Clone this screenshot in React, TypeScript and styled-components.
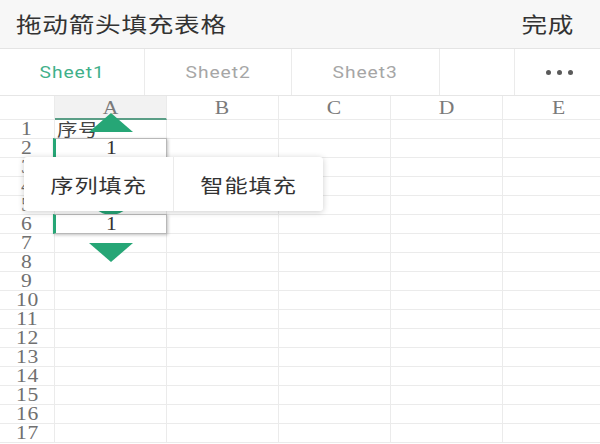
import { ReactElement } from 'react';
import styled, { createGlobalStyle } from 'styled-components';

const GREEN = '#26a676';
const LINE = '#ebebeb';
const SERIF = '"Liberation Serif", "DejaVu Serif", serif';
const CJK = '"Noto Sans CJK SC", "Noto Sans", sans-serif';

const COLUMNS = ['A', 'B', 'C', 'D', 'E'];
const ROWS = Array.from({ length: 17 }, (_, i) => i + 1);

const TABS = [
  { label: 'Sheet1', width: 145, active: true },
  { label: 'Sheet2', width: 147, active: false },
  { label: 'Sheet3', width: 148, active: false },
  { label: '', width: 75, active: false },
];

const GlobalStyle = createGlobalStyle`
  body {
    margin: 0;
    background: #ffffff;
    font-family: ${CJK};
  }
`;

export default function App(): ReactElement {
  return (
    <>
      <GlobalStyle />
      <Page>
        <TitleBar>
          <Title>拖动箭头填充表格</Title>
          <Done>完成</Done>
        </TitleBar>
        <TabBar>
          {TABS.map((t, i) => (
            <Tab key={i} $width={t.width}>
              <TabLabel $active={t.active}>{t.label}</TabLabel>
            </Tab>
          ))}
          <MoreTab>
            <Dot />
            <Dot />
            <Dot />
          </MoreTab>
        </TabBar>
        <Sheet>
          <Grid>
            <Corner />
            {COLUMNS.map((c) => (
              <ColHeader key={c} $selected={c === 'A'}>
                <Wide>{c}</Wide>
              </ColHeader>
            ))}
            {ROWS.map((r) => (
              <RowCells key={r} row={r} />
            ))}
          </Grid>

          <ArrowUp />
          <SelectedCell $top={42}>
            <Wide>1</Wide>
          </SelectedCell>
          <Handle />
          <SelectedCell $top={118}>
            <Wide>1</Wide>
          </SelectedCell>
          <ArrowDown />

          <FillMenu>
            <MenuItem>
              <MenuLabel>序列填充</MenuLabel>
            </MenuItem>
            <MenuItem>
              <MenuLabel>智能填充</MenuLabel>
            </MenuItem>
          </FillMenu>
        </Sheet>
      </Page>
    </>
  );
}

const RowCells = ({ row }: { row: number }): ReactElement => (
  <>
    <RowHeader>
      <Wide>{row}</Wide>
    </RowHeader>
    {COLUMNS.map((c) => (
      <Cell key={c}>{row === 1 && c === 'A' ? <CellText>序号</CellText> : null}</Cell>
    ))}
  </>
);

const Page = styled.div`
  width: 600px;
  height: 444px;
  overflow: hidden;
  display: flex;
  flex-direction: column;
`;

const TitleBar = styled.div`
  height: 48px;
  flex-shrink: 0;
  display: flex;
  align-items: center;
  justify-content: space-between;
  padding: 0 26px 0 16px;
  background: #f7f7f7;
  border-bottom: 1px solid #e4e4e4;
  color: #333;
  font-size: 21px;
`;

const Title = styled.div`
  padding-bottom: 2px;
  letter-spacing: 0.6px;
  transform: scaleX(1.22);
  transform-origin: left center;
`;

const Done = styled.div`
  padding-bottom: 2px;
  letter-spacing: 0.6px;
  transform: scaleX(1.22);
  transform-origin: right center;
`;

const TabBar = styled.div`
  height: 46px;
  flex-shrink: 0;
  display: flex;
  border-bottom: 1px solid #e6e6e6;
  background: #fff;
`;

const Tab = styled.div<{ $width: number }>`
  width: ${(p) => p.$width}px;
  flex-shrink: 0;
  display: flex;
  align-items: center;
  justify-content: center;
  box-sizing: border-box;
  border-right: 1px solid ${LINE};
`;

const TabLabel = styled.span<{ $active: boolean }>`
  display: inline-block;
  font-family: Roboto, "Noto Sans", sans-serif;
  font-size: 16px;
  letter-spacing: 0.8px;
  transform: scaleX(1.2);
  color: ${(p) => (p.$active ? '#3fb08a' : '#a6a6a6')};
`;

const MoreTab = styled.div`
  flex: 1;
  display: flex;
  align-items: center;
  justify-content: center;
  gap: 6px;
  padding-left: 4px;
  padding-top: 1px;
`;

const Dot = styled.span`
  width: 5px;
  height: 5px;
  border-radius: 50%;
  background: #5a5a5a;
`;

const Sheet = styled.div`
  position: relative;
  flex: 1;
`;

const Grid = styled.div`
  display: grid;
  grid-template-columns: 55px repeat(5, 112px);
  grid-template-rows: 24px repeat(17, 19px);
`;

const BaseCell = styled.div`
  box-sizing: border-box;
  border-right: 1px solid ${LINE};
  border-bottom: 1px solid ${LINE};
`;

const Wide = styled.span`
  display: inline-block;
  transform: scaleX(1.2);
`;

const Corner = styled(BaseCell)`
  background: #fff;
`;

const ColHeader = styled(BaseCell)<{ $selected: boolean }>`
  display: flex;
  align-items: center;
  justify-content: center;
  background: ${(p) => (p.$selected ? '#f2f2f2' : '#fff')};
  border-bottom: ${(p) => (p.$selected ? '2px solid #5a9e86' : `1px solid ${LINE}`)};
  font-family: ${SERIF};
  font-size: 18px;
  color: #7a7a7a;
  padding-top: 2px;
`;

const RowHeader = styled(BaseCell)`
  display: flex;
  align-items: center;
  justify-content: center;
  font-family: ${SERIF};
  font-size: 18px;
  letter-spacing: 0.5px;
  color: #707070;
  line-height: 1;
`;

const Cell = styled(BaseCell)`
  position: relative;
  overflow: visible;
`;

const CellText = styled.span`
  position: absolute;
  left: 2px;
  top: -1px;
  font-size: 17px;
  letter-spacing: 0.5px;
  transform: scaleX(1.2);
  transform-origin: left center;
  color: #444;
  white-space: nowrap;
  line-height: 20px;
`;

const SelectedCell = styled.div<{ $top: number }>`
  position: absolute;
  left: 53px;
  top: ${(p) => p.$top}px;
  width: 114px;
  height: 20px;
  box-sizing: border-box;
  background: #fff;
  border: 1px solid #b8b8b8;
  border-left: 3px solid ${GREEN};
  box-shadow: 1px 1px 3px rgba(0, 0, 0, 0.25);
  display: flex;
  align-items: center;
  justify-content: center;
  font-family: ${SERIF};
  font-size: 18px;
  color: #333;
  line-height: 1;
`;

const ArrowUp = styled.div`
  position: absolute;
  left: 89px;
  top: 17px;
  width: 0;
  height: 0;
  border-left: 22px solid transparent;
  border-right: 22px solid transparent;
  border-bottom: 19px solid ${GREEN};
`;

const ArrowDown = styled.div`
  position: absolute;
  left: 89px;
  top: 147px;
  width: 0;
  height: 0;
  border-left: 22px solid transparent;
  border-right: 22px solid transparent;
  border-top: 19px solid ${GREEN};
`;

const Handle = styled.div`
  position: absolute;
  left: 89px;
  top: 75px;
  width: 44px;
  height: 44px;
  border-radius: 50%;
  background: ${GREEN};
`;

const FillMenu = styled.div`
  position: absolute;
  left: 24px;
  top: 61px;
  width: 299px;
  height: 54px;
  display: flex;
  background: #fff;
  border-radius: 3px;
  box-shadow: 0 1px 6px rgba(0, 0, 0, 0.2);
`;

const MenuItem = styled.div`
  flex: 1;
  display: flex;
  align-items: center;
  justify-content: center;
  &:first-child {
    border-right: 1px solid ${LINE};
  }
`;

const MenuLabel = styled.span`
  display: inline-block;
  font-size: 19px;
  letter-spacing: 0.8px;
  transform: scaleX(1.22);
  color: #333;
`;
